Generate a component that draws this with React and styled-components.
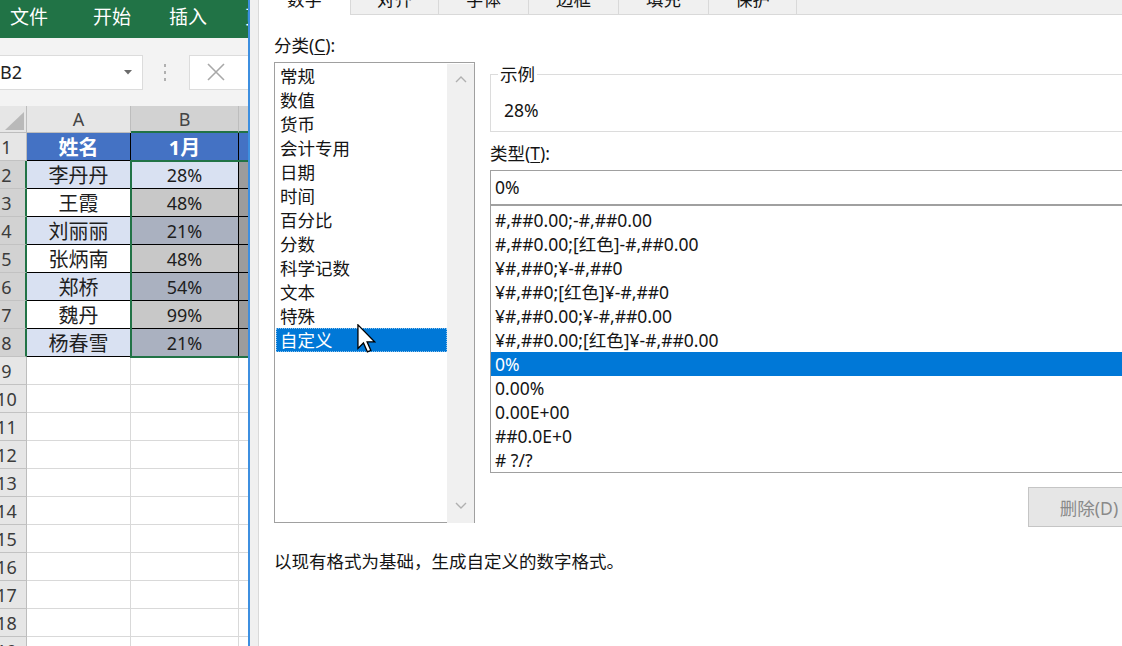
import React from "react";
import styled, { createGlobalStyle } from "styled-components";

const GlobalStyle = createGlobalStyle`
  html, body { margin: 0; padding: 0; overflow: hidden; background: #fff; }
  body { font-family: "Noto Sans", "Noto Sans CJK SC", sans-serif; }
`;

const names = ["姓名", "李丹丹", "王霞", "刘丽丽", "张炳南", "郑桥", "魏丹", "杨春雪"];
const values = ["1月", "28%", "48%", "21%", "48%", "54%", "99%", "21%"];

const categories = ["常规", "数值", "货币", "会计专用", "日期", "时间", "百分比", "分数", "科学记数", "文本", "特殊", "自定义"];
const formats = [
  "#,##0.00;-#,##0.00",
  "#,##0.00;[红色]-#,##0.00",
  "¥#,##0;¥-#,##0",
  "¥#,##0;[红色]¥-#,##0",
  "¥#,##0.00;¥-#,##0.00",
  "¥#,##0.00;[红色]¥-#,##0.00",
  "0%",
  "0.00%",
  "0.00E+00",
  "##0.0E+0",
  "# ?/?",
];
const tabs = [
  { label: "数字", width: 92 },
  { label: "对齐", width: 88 },
  { label: "字体", width: 90 },
  { label: "边框", width: 90 },
  { label: "填充", width: 90 },
  { label: "保护", width: 88 },
];

const Screen = styled.div`
  position: relative;
  display: flex;
  width: 1122px;
  height: 646px;
  overflow: hidden;
`;

/* ---------- spreadsheet ---------- */

const Sheet = styled.div`
  width: 248px;
  flex: none;
  display: flex;
  flex-direction: column;
  overflow: hidden;
  background: #fff;
  font-family: "Noto Sans", "Noto Sans CJK SC", sans-serif;
`;

const Ribbon = styled.div`
  height: 38px;
  flex: none;
  box-sizing: border-box;
  padding: 0 0 8px 10px;
  background: #217346;
  display: flex;
  align-items: center;
  gap: 38px;
  color: #fff;
  font-size: 19px;
  white-space: nowrap;
  font-family: "Noto Sans CJK SC", sans-serif;
`;

const RibbonTab = styled.span`
  &:first-child { margin-right: 7px; }
`;

const FormulaBar = styled.div`
  height: 68px;
  flex: none;
  background: #f3f3f3;
  display: flex;
  align-items: center;
`;

const NameBox = styled.div`
  box-sizing: border-box;
  width: 143px;
  height: 35px;
  flex: none;
  background: #fff;
  border: 1px solid #dcdcdc;
  border-left: none;
  display: flex;
  align-items: center;
  justify-content: space-between;
  padding-right: 10px;
  font-size: 18px;
  color: #222;
`;

const Dots = styled.div`
  margin-left: 21px;
  display: flex;
  flex-direction: column;
  gap: 4px;
  & span { width: 2px; height: 3px; background: #b0b0b0; }
`;

const CancelBox = styled.div`
  margin-left: 23px;
  width: 70px;
  height: 35px;
  flex: none;
  box-sizing: border-box;
  background: #fff;
  border: 1px solid #dcdcdc;
  display: flex;
  align-items: center;
  padding-left: 16px;
`;

const Grid = styled.div`
  position: relative;
  display: grid;
  grid-template-columns: 27px 104px 108px 60px;
  grid-template-rows: 27px;
  grid-auto-rows: 28px;
`;

const Corner = styled.div`
  box-sizing: border-box;
  background: #e6e6e6;
  border-right: 1px solid #bdbdbd;
  border-bottom: 1px solid #bdbdbd;
  padding: 6px 0 0 5px;
`;

const ColHead = styled.div`
  box-sizing: border-box;
  display: flex;
  align-items: center;
  justify-content: center;
  background: ${(p) => (p.$active ? "#d2d2d2" : "#e6e6e6")};
  color: #444;
  font-size: 18px;
  border-right: 1px solid #bdbdbd;
  border-bottom: ${(p) => (p.$active ? "2px solid #217346" : "1px solid #bdbdbd")};
`;

const RowHead = styled.div`
  box-sizing: border-box;
  display: flex;
  align-items: center;
  overflow: hidden;
  background: ${(p) => (p.$active ? "#d2d2d2" : "#e6e6e6")};
  color: #3c3c3c;
  font-size: 18px;
  border-bottom: 1px solid #c2c2c2;
  border-right: ${(p) => (p.$active ? "2px solid #217346" : "1px solid #bdbdbd")};
`;

const RowNum = styled.span`
  width: 13px;
  flex: none;
  display: flex;
  justify-content: center;
  white-space: nowrap;
`;

const Cell = styled.div`
  box-sizing: border-box;
  display: flex;
  align-items: center;
  justify-content: center;
  overflow: hidden;
  white-space: nowrap;
  background: ${(p) => p.$bg || "#fff"};
  color: ${(p) => p.$color || "#1e1e1e"};
  font-weight: ${(p) => (p.$bold ? 700 : 400)};
  font-size: ${(p) => p.$size || 18}px;
  font-family: "Noto Sans", "Noto Sans CJK SC", sans-serif;
  border-right: 1px solid ${(p) => p.$line || "#d9d9d9"};
  border-bottom: 1px solid ${(p) => p.$line || "#d9d9d9"};
`;

const Selection = styled.div`
  position: absolute;
  left: 130px;
  top: 54px;
  width: 140px;
  height: 198px;
  box-sizing: border-box;
  border: 2px solid #217346;
  pointer-events: none;
`;

/* ---------- dialog ---------- */

const Dialog = styled.div`
  flex: 1;
  min-width: 0;
  display: flex;
  background: #f0f0f0;
  border-left: 2px solid #3d8fe0;
  padding-left: 8px;
`;

const Page = styled.div`
  flex: none;
  width: 900px;
  background: #fff;
  border-left: 1px solid #d9d9d9;
  display: flex;
  flex-direction: column;
  font-family: "Noto Sans", "Noto Sans CJK SC", sans-serif;
  font-size: 17.5px;
  color: #141414;
`;

const TabStrip = styled.div`
  display: flex;
  height: 31px;
  margin-top: -16px;
`;

const Tab = styled.div`
  box-sizing: border-box;
  width: ${(p) => p.$w}px;
  flex: none;
  display: flex;
  align-items: center;
  justify-content: center;
  background: ${(p) => (p.$selected ? "#fff" : "#f0f0f0")};
  border-right: 1px solid #d9d9d9;
  border-bottom: ${(p) => (p.$selected ? "none" : "1px solid #d9d9d9")};
  line-height: 31px;
`;

const TabFill = styled.div`
  flex: 1;
  background: #f0f0f0;
  border-bottom: 1px solid #d9d9d9;
`;

const Body = styled.div`
  padding: 19px 0 0 15px;
  display: grid;
  grid-template-columns: 201px 660px;
  column-gap: 15px;
  align-items: start;
`;

const Column = styled.div`
  display: flex;
  flex-direction: column;
`;

const Label = styled.div`
  line-height: 22px;
  margin-top: ${(p) => p.$top || 0}px;
  & u { text-underline-offset: 2px; }
`;

const CategoryList = styled.div`
  box-sizing: border-box;
  margin-top: 6px;
  width: 201px;
  height: 461px;
  border: 1px solid #a0a0a0;
  padding: 1px 0 0 1px;
  display: flex;
`;

const Items = styled.div`
  flex: 1;
  min-width: 0;
`;

const Item = styled.div`
  box-sizing: border-box;
  height: 24px;
  line-height: 24px;
  padding-left: 4px;
  white-space: nowrap;
  background: ${(p) => (p.$selected ? "#0078d7" : "transparent")};
  color: ${(p) => (p.$selected ? "#fff" : "inherit")};
  outline: ${(p) => (p.$dotted ? "1px dotted rgba(255,255,255,0.55)" : "none")};
  outline-offset: -1px;
`;

const ScrollBar = styled.div`
  width: 27px;
  flex: none;
  background: #f0f0f0;
  display: flex;
  flex-direction: column;
  align-items: center;
  justify-content: space-between;
  padding: 12px 0 14px;
  box-sizing: border-box;
  height: 459px;
`;

const GroupBox = styled.div`
  position: relative;
  box-sizing: border-box;
  margin-top: 40px;
  height: 58px;
  border: 1px solid #dcdcdc;
  border-right: none;
  padding: 24px 0 0 13px;
  line-height: 22px;
`;

const Legend = styled.span`
  position: absolute;
  top: -12px;
  left: 7px;
  padding: 0 2px;
  background: #fff;
  line-height: 22px;
`;

const TypeInput = styled.div`
  box-sizing: border-box;
  margin-top: 6px;
  height: 35px;
  border: 1px solid #a0a0a0;
  border-right: none;
  padding-left: 4px;
  line-height: 33px;
`;

const FormatList = styled.div`
  box-sizing: border-box;
  height: 268px;
  border: 1px solid #a0a0a0;
  border-right: none;
  padding-top: 2px;
`;

const ButtonRow = styled.div`
  display: flex;
  justify-content: flex-end;
  margin-top: 14px;
`;

const DeleteButton = styled.div`
  box-sizing: border-box;
  width: 122px;
  height: 40px;
  background: #e6e6e6;
  border: 1px solid #c5c5c5;
  color: #8a8a8a;
  display: flex;
  align-items: center;
  justify-content: center;
`;

const Description = styled.div`
  grid-column: 1 / -1;
  margin-top: 23px;
  line-height: 22px;
`;

const Cursor = styled.svg`
  position: absolute;
  left: 357px;
  top: 324px;
`;

const Chevron = ({ up }) => (
  <svg width="12" height="7" viewBox="0 0 12 7">
    <polyline
      points={up ? "1,6 6,1 11,6" : "1,1 6,6 11,1"}
      fill="none"
      stroke="#b0b0b0"
      strokeWidth="1.4"
    />
  </svg>
);

const cellBg = (row, col) => {
  if (row === 1) return "#4472c4";
  if (col === 0) return row % 2 === 0 ? "#d9e1f2" : "#fff";
  if (col === 1) {
    if (row === 2) return "#d9e1f2";
    return row % 2 === 0 ? "#aab1c0" : "#c8c8c8";
  }
  return "#9c9c9c";
};

const SheetGrid = () => {
  const rows = [];
  for (let r = 1; r <= 19; r++) {
    const inTable = r <= 8;
    rows.push(
      <RowHead key={`h${r}`} $active={r >= 2 && r <= 8}>
        <RowNum>{r}</RowNum>
      </RowHead>
    );
    if (inTable) {
      rows.push(
        <Cell key={`a${r}`} $bg={cellBg(r, 0)} $line="#000" $size={20} $bold={r === 1} $color={r === 1 ? "#fff" : undefined}>
          {names[r - 1]}
        </Cell>,
        <Cell key={`b${r}`} $bg={cellBg(r, 1)} $line="#000" $size={r === 1 ? 20 : 18} $bold={r === 1} $color={r === 1 ? "#fff" : undefined}>
          {values[r - 1]}
        </Cell>,
        <Cell key={`c${r}`} $bg={cellBg(r, 2)} $line="#000" />
      );
    } else {
      rows.push(<Cell key={`a${r}`} />, <Cell key={`b${r}`} />, <Cell key={`c${r}`} />);
    }
  }
  return (
    <Grid>
      <Corner>
        <svg width="20" height="19" viewBox="0 0 20 19">
          <polygon points="19,0 19,18 0,18" fill="#b9b9b9" />
        </svg>
      </Corner>
      <ColHead>A</ColHead>
      <ColHead $active>B</ColHead>
      <ColHead $active />
      {rows}
      <Selection />
    </Grid>
  );
};

export default function App() {
  return (
    <>
      <GlobalStyle />
      <Screen>
        <Sheet>
          <Ribbon>
            <RibbonTab>文件</RibbonTab>
            <RibbonTab>开始</RibbonTab>
            <RibbonTab>插入</RibbonTab>
            <RibbonTab>页面</RibbonTab>
          </Ribbon>
          <FormulaBar>
            <NameBox>
              <span>B2</span>
              <svg width="8" height="5" viewBox="0 0 8 5">
                <polygon points="0,0 8,0 4,4.5" fill="#6b6b6b" />
              </svg>
            </NameBox>
            <Dots>
              <span />
              <span />
              <span />
            </Dots>
            <CancelBox>
              <svg width="20" height="20" viewBox="0 0 20 20">
                <path d="M2 2 L18 18 M18 2 L2 18" stroke="#a8a8a8" strokeWidth="1.6" />
              </svg>
            </CancelBox>
          </FormulaBar>
          <SheetGrid />
        </Sheet>

        <Dialog>
          <Page>
            <TabStrip>
              {tabs.map((t, i) => (
                <Tab key={t.label} $w={t.width} $selected={i === 0}>
                  {t.label}
                </Tab>
              ))}
              <TabFill />
            </TabStrip>
            <Body>
              <Column>
                <Label>
                  分类(<u>C</u>):
                </Label>
                <CategoryList>
                  <Items>
                    {categories.map((c, i) => (
                      <Item key={c} $selected={i === 11} $dotted={i === 11}>
                        {c}
                      </Item>
                    ))}
                  </Items>
                  <ScrollBar>
                    <Chevron up />
                    <Chevron />
                  </ScrollBar>
                </CategoryList>
              </Column>
              <Column>
                <GroupBox>
                  <Legend>示例</Legend>
                  28%
                </GroupBox>
                <Label $top={10}>
                  类型(<u>T</u>):
                </Label>
                <TypeInput>0%</TypeInput>
                <FormatList>
                  {formats.map((f, i) => (
                    <Item key={f} $selected={i === 6}>
                      {f}
                    </Item>
                  ))}
                </FormatList>
                <ButtonRow>
                  <DeleteButton>删除(D)</DeleteButton>
                </ButtonRow>
              </Column>
              <Description>以现有格式为基础，生成自定义的数字格式。</Description>
            </Body>
          </Page>
        </Dialog>

        <Cursor width="19" height="29" viewBox="0 0 13 20">
          <path
            d="M0.6 0.6 L0.6 16.8 L4.4 13.1 L7.1 19.2 L9.5 18.2 L6.9 12.3 L12.1 12.3 Z"
            fill="#fff"
            stroke="#000"
            strokeWidth="0.9"
            strokeLinejoin="miter"
          />
        </Cursor>
      </Screen>
    </>
  );
}
